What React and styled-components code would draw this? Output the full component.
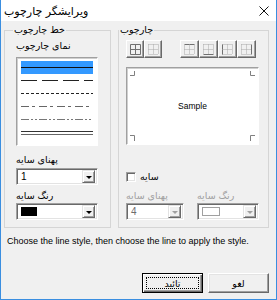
import React from "react";
import styled, { createGlobalStyle } from "styled-components";

const GlobalStyle = createGlobalStyle`
  body {
    margin: 0;
    background: #ffffff;
  }
  * {
    box-sizing: border-box;
  }
`;

const persian = `Tahoma, "DejaVu Sans", sans-serif`;
const latin = `"Liberation Sans", Arial, sans-serif`;

const lineStyles = [
  { dash: "", selected: true },
  { dash: "16 5" },
  { dash: "3 2" },
  { dash: "8 3 3 4", color: "#666" },
  { dash: "8 2 2 2 2 2", color: "#777" },
  { double: true },
];

function LineSample({ dash, color, double }) {
  return (
    <svg width="72" height="13">
      {double ? (
        <>
          <line x1="0" y1="5.5" x2="72" y2="5.5" stroke="#333" strokeWidth="1" />
          <line x1="0" y1="8.5" x2="72" y2="8.5" stroke="#666" strokeWidth="1" />
        </>
      ) : (
        <line
          x1="0"
          y1="6.5"
          x2="72"
          y2="6.5"
          stroke={color || "#222"}
          strokeWidth="1"
          strokeDasharray={dash}
        />
      )}
    </svg>
  );
}

// which edges of the little border icon are drawn solid
function BorderIcon({ solid = [] }) {
  const has = (k) => solid.includes(k);
  const line = (k, x1, y1, x2, y2) => (
    <line
      x1={x1}
      y1={y1}
      x2={x2}
      y2={y2}
      stroke={has(k) ? "#707070" : "#a8a8a8"}
      strokeWidth="1"
      strokeDasharray={has(k) ? "" : "1 1"}
    />
  );
  return (
    <svg width="11" height="11">
      {line("top", 0.5, 0.5, 10.5, 0.5)}
      {line("bottom", 0.5, 10.5, 10.5, 10.5)}
      {line("left", 0.5, 0.5, 0.5, 10.5)}
      {line("right", 10.5, 0.5, 10.5, 10.5)}
      {line("h", 0.5, 5.5, 10.5, 5.5)}
      {line("v", 5.5, 0.5, 5.5, 10.5)}
    </svg>
  );
}

function Combo({ width, disabled, value, swatch }) {
  return (
    <ComboBox $width={width}>
      {swatch ? (
        <Swatch $color={swatch} $disabled={disabled} />
      ) : (
        <ComboValue $disabled={disabled}>{value}</ComboValue>
      )}
      <ArrowButton>
        <Arrow $disabled={disabled} />
      </ArrowButton>
    </ComboBox>
  );
}

export default function App() {
  return (
    <>
      <GlobalStyle />
      <Window>
        <TitleBar>
          <Title>ویرایشگر چارچوب</Title>
          <svg width="10" height="10">
            <line x1="0.5" y1="0.5" x2="9.5" y2="9.5" stroke="#111" strokeWidth="1" />
            <line x1="9.5" y1="0.5" x2="0.5" y2="9.5" stroke="#111" strokeWidth="1" />
          </svg>
        </TitleBar>
        <Body>
          <GroupsRow>
            <Group $width={107} $pad={11}>
              <Legend $left={8}>خط چارچوب</Legend>
              <Column>
                <Label $mt={9}>نمای چارچوب</Label>
                <ListBox>
                  {lineStyles.map((s, i) => (
                    <LineItem key={i} $selected={s.selected}>
                      <LineSample {...s} color={s.selected ? "#111" : s.color} />
                    </LineItem>
                  ))}
                </ListBox>
                <Label $mt={8}>پهنای سایه</Label>
                <ComboSlot $mt={2}>
                  <Combo width={82} value="1" />
                </ComboSlot>
                <Label $mt={5}>رنگ سایه</Label>
                <ComboSlot $mt={1}>
                  <Combo width={82} swatch="#000" />
                </ComboSlot>
              </Column>
            </Group>
            <Group $width={151} $pad={7}>
              <Legend $left={0}>چارچوب</Legend>
              <Column>
                <ToolRow>
                  <ToolGroup>
                    <ToolButton $w={18}>
                      <BorderIcon solid={["top", "bottom", "left", "right", "h", "v"]} />
                    </ToolButton>
                    <ToolButton $w={18}>
                      <BorderIcon />
                    </ToolButton>
                  </ToolGroup>
                  <ToolGroup>
                    <ToolButton $w={19}>
                      <BorderIcon solid={["top"]} />
                    </ToolButton>
                    <ToolButton $w={19}>
                      <BorderIcon solid={["bottom"]} />
                    </ToolButton>
                    <ToolButton $w={19}>
                      <BorderIcon solid={["left"]} />
                    </ToolButton>
                    <ToolButton $w={19}>
                      <BorderIcon solid={["right"]} />
                    </ToolButton>
                  </ToolGroup>
                </ToolRow>
                <SampleBox>
                  <Corners width="129" height="74">
                    <path d="M6.5 2 V6.5 H2" />
                    <path d="M122.5 2 V6.5 H127" />
                    <path d="M6.5 72 V66.5 H2" />
                    <path d="M122.5 72 V66.5 H127" />
                  </Corners>
                  <SampleText>Sample</SampleText>
                </SampleBox>
                <CheckRow>
                  <CheckBox />
                  <CheckLabel>سایه</CheckLabel>
                </CheckRow>
                <DisabledRow>
                  <Field>
                    <Label $disabled>پهنای سایه</Label>
                    <ComboSlot $mt={1}>
                      <Combo width={58} value="4" disabled />
                    </ComboSlot>
                  </Field>
                  <Field>
                    <Label $disabled>رنگ سایه</Label>
                    <ComboSlot $mt={1}>
                      <Combo width={62} swatch="#fff" disabled />
                    </ComboSlot>
                  </Field>
                </DisabledRow>
              </Column>
            </Group>
          </GroupsRow>
          <Hint>Choose the line style, then choose the line to apply the style.</Hint>
          <ButtonRow>
            <DialogButton $default>تائید</DialogButton>
            <DialogButton>لغو</DialogButton>
          </ButtonRow>
        </Body>
      </Window>
    </>
  );
}

const Window = styled.div`
  width: 277px;
  height: 300px;
  border: 1px solid #3a8ee0;
  border-top: none;
  display: flex;
  flex-direction: column;
  background: #f0f0f0;
`;

const TitleBar = styled.div`
  height: 21px;
  background: #ffffff;
  display: flex;
  align-items: center;
  justify-content: space-between;
  padding: 0 7px 0 3px;
`;

const Title = styled.div`
  font-family: ${persian};
  font-size: 11px;
  color: #000;
  padding-top: 2px;
`;

const Body = styled.div`
  flex: 1;
  display: flex;
  flex-direction: column;
  padding: 9px 7px 6px 3px;
`;

const GroupsRow = styled.div`
  display: flex;
  gap: 7px;
`;

const Group = styled.div`
  position: relative;
  width: ${(p) => p.$width}px;
  height: 198px;
  border: 1px solid #d5d5d5;
  padding-left: ${(p) => p.$pad}px;
`;

const Legend = styled.span`
  position: absolute;
  top: -7px;
  left: ${(p) => p.$left}px;
  padding: 0 1px;
  line-height: 12px;
  background: #f0f0f0;
  font-family: ${persian};
  font-size: 9.5px;
  color: #000;
  white-space: nowrap;
`;

const Column = styled.div`
  display: flex;
  flex-direction: column;
  align-items: flex-start;
`;

const Label = styled.div`
  margin-top: ${(p) => p.$mt || 0}px;
  height: 12px;
  line-height: 12px;
  font-family: ${persian};
  font-size: 9.5px;
  color: ${(p) => (p.$disabled ? "#a0a0a0" : "#000")};
  white-space: nowrap;
`;

const ListBox = styled.div`
  margin-top: 5px;
  width: 82px;
  height: 89px;
  background: #fff;
  border: 1px solid;
  border-color: #a0a0a0 #fff #fff #a0a0a0;
  box-shadow: inset 1px 1px #cfcfcf;
  padding: 3px 3px 0 4px;
  display: flex;
  flex-direction: column;
`;

const LineItem = styled.div`
  width: 72px;
  height: 13px;
  display: flex;
  background: ${(p) => (p.$selected ? "#3399ff" : "transparent")};
`;

const ComboSlot = styled.div`
  margin-top: ${(p) => p.$mt || 0}px;
`;

const ComboBox = styled.div`
  width: ${(p) => p.$width}px;
  height: 17px;
  background: #fff;
  border: 1px solid;
  border-color: #a0a0a0 #fff #fff #a0a0a0;
  box-shadow: inset 1px 1px #696969, inset -1px -1px #e3e3e3;
  display: flex;
  align-items: center;
  padding: 2px 2px 2px 4px;
`;

const ComboValue = styled.div`
  flex: 1;
  font-family: ${latin};
  font-size: 10px;
  color: ${(p) => (p.$disabled ? "#6d6d6d" : "#000")};
`;

const Swatch = styled.div`
  flex: none;
  width: ${(p) => (p.$disabled ? 18 : 16)}px;
  height: 9px;
  background: ${(p) => p.$color};
  border: 1px solid ${(p) => (p.$disabled ? "#a0a0a0" : "#000")};
  margin-right: auto;
`;

const ArrowButton = styled.div`
  width: 13px;
  height: 13px;
  background: #f0f0f0;
  border: 1px solid;
  border-color: #e3e3e3 #696969 #696969 #e3e3e3;
  box-shadow: inset 1px 1px #fff, inset -1px -1px #a0a0a0;
  display: flex;
  align-items: center;
  justify-content: center;
`;

const Arrow = styled.div`
  width: 0;
  height: 0;
  border-left: 3px solid transparent;
  border-right: 3px solid transparent;
  border-top: 3px solid ${(p) => (p.$disabled ? "#a0a0a0" : "#000")};
  margin-top: 1px;
`;

const ToolRow = styled.div`
  margin-top: 9px;
  display: flex;
  gap: 18px;
`;

const ToolGroup = styled.div`
  display: flex;
`;

const ToolButton = styled.div`
  width: ${(p) => p.$w}px;
  height: 18px;
  background: #f0f0f0;
  border: 1px solid;
  border-color: #fff #696969 #696969 #fff;
  box-shadow: inset -1px -1px #a0a0a0;
  display: flex;
  align-items: center;
  justify-content: center;
`;

const SampleBox = styled.div`
  position: relative;
  margin-top: 9px;
  width: 133px;
  height: 78px;
  background: #fff;
  border: 1px solid;
  border-color: #a0a0a0 #fff #fff #a0a0a0;
  box-shadow: inset 1px 1px #cfcfcf;
  display: flex;
  align-items: center;
  justify-content: center;
`;

const Corners = styled.svg`
  position: absolute;
  left: 1px;
  top: 1px;
  fill: none;
  stroke: #808080;
  stroke-width: 1;
`;

const SampleText = styled.div`
  font-family: ${latin};
  font-size: 8.5px;
  color: #000;
`;

const CheckRow = styled.div`
  margin-top: 26px;
  display: flex;
  align-items: center;
  gap: 4px;
`;

const CheckBox = styled.div`
  width: 10px;
  height: 10px;
  background: #fff;
  border: 1px solid;
  border-color: #a0a0a0 #fff #fff #a0a0a0;
  box-shadow: inset 1px 1px #696969, inset -1px -1px #e3e3e3;
`;

const CheckLabel = styled.div`
  font-family: ${persian};
  font-size: 9.5px;
  line-height: 12px;
  color: #000;
`;

const DisabledRow = styled.div`
  margin-top: 7px;
  display: flex;
  gap: 13px;
`;

const Field = styled.div`
  display: flex;
  flex-direction: column;
  align-items: flex-start;
`;

const Hint = styled.div`
  margin: 7px 0 0 3px;
  font-family: ${latin};
  font-size: 9px;
  line-height: 12px;
  color: #000;
  white-space: nowrap;
`;

const ButtonRow = styled.div`
  margin-top: auto;
  display: flex;
  justify-content: flex-end;
  gap: 5px;
`;

const DialogButton = styled.div`
  position: relative;
  width: 61px;
  height: 20px;
  display: flex;
  align-items: center;
  justify-content: center;
  font-family: ${persian};
  font-size: 9.5px;
  color: #000;
  background: #f0f0f0;
  border: 1px solid;
  border-color: ${(p) => (p.$default ? "#000" : "#fff #696969 #696969 #fff")};
  box-shadow: ${(p) =>
    p.$default
      ? "inset 1px 1px #fff, inset -1px -1px #696969, inset -2px -2px #a0a0a0"
      : "inset -1px -1px #a0a0a0, inset 1px 1px #e3e3e3"};

  &::after {
    content: "";
    display: ${(p) => (p.$default ? "block" : "none")};
    position: absolute;
    inset: 3px;
    border: 1px dotted #000;
  }
`;
